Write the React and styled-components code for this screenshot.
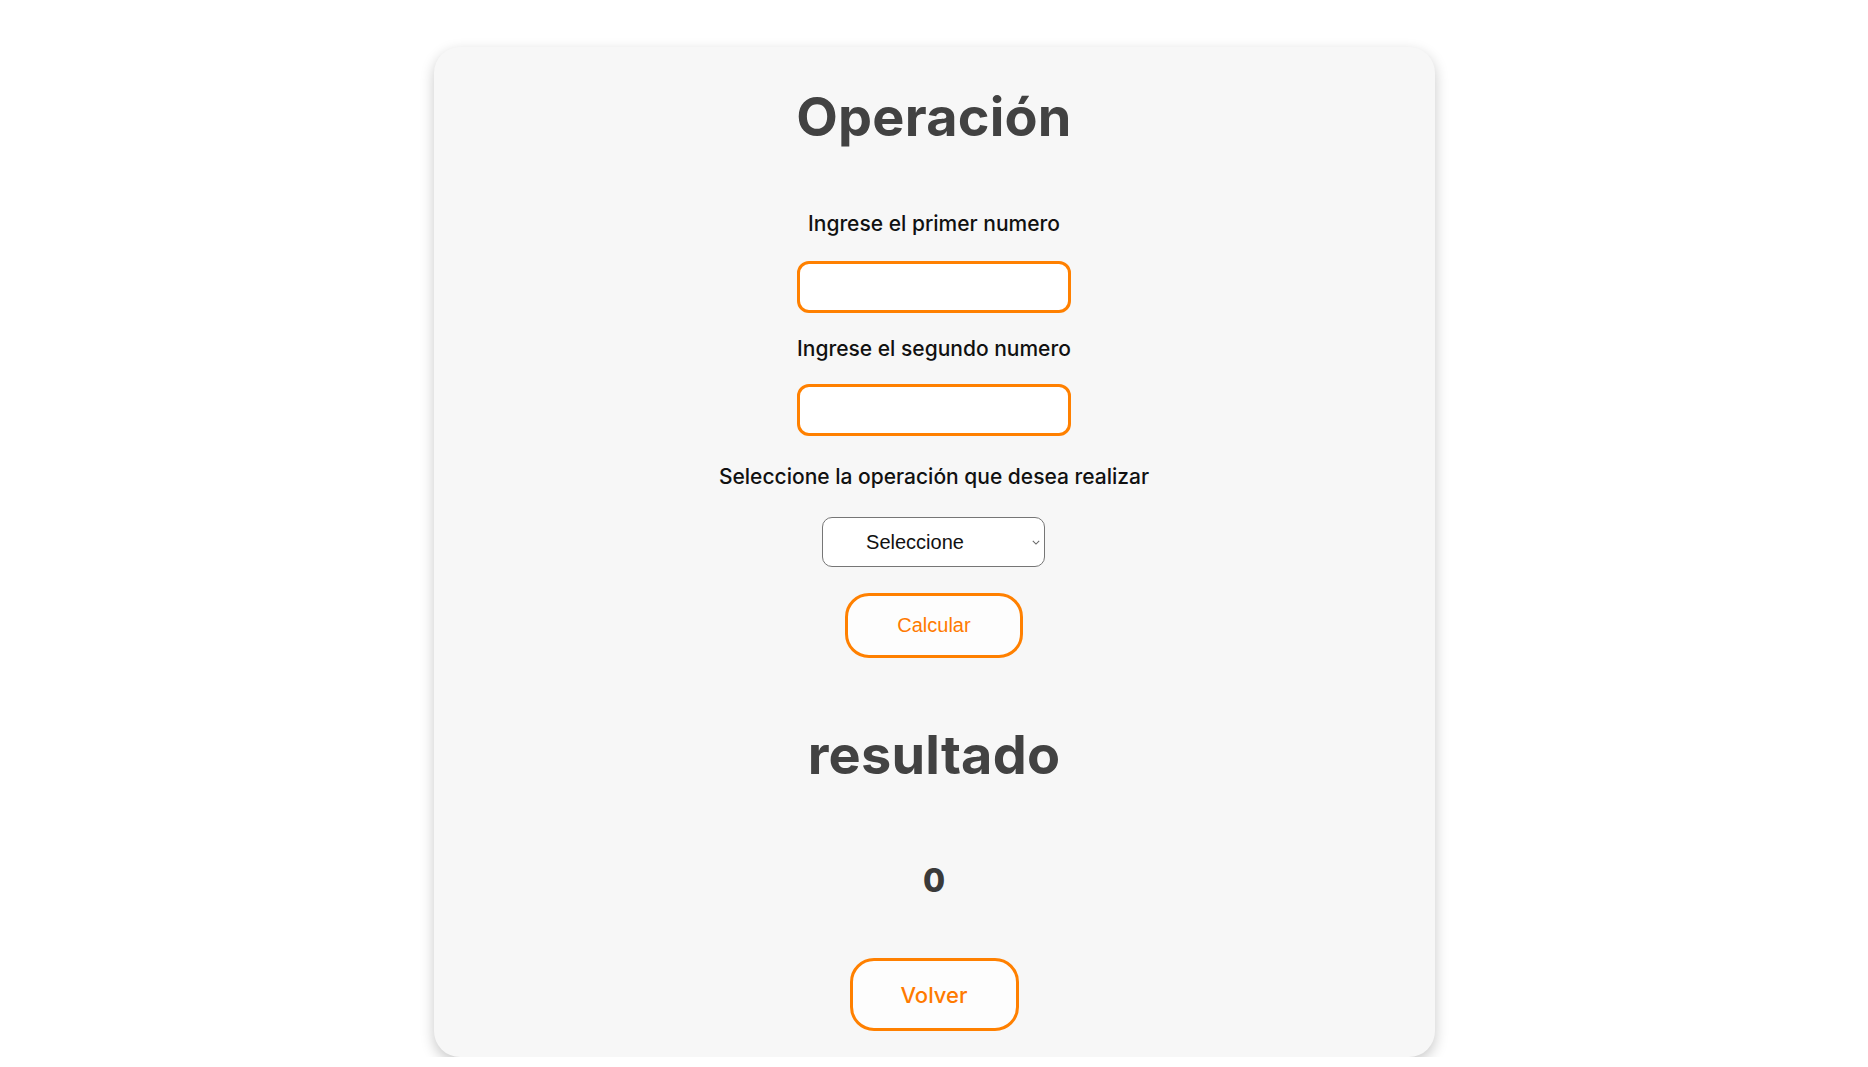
import React, { useState } from 'react';
import styled, { createGlobalStyle } from 'styled-components';

const GlobalStyle = createGlobalStyle`
  body {
    margin: 0;
    background: #ffffff;
    font-family: "Inter", "Open Sans", sans-serif;
  }
`;

const chevron =
  "data:image/svg+xml;utf8,<svg xmlns='http://www.w3.org/2000/svg' width='10' height='6' viewBox='0 0 10 6'><path d='M1 1l4 4 4-4' fill='none' stroke='%23666' stroke-width='1.3'/></svg>";

const Page = styled.main`
  display: flex;
  justify-content: center;
  padding-top: 47px;
`;

const Card = styled.section`
  width: 1001px;
  box-sizing: border-box;
  background: #f7f7f7;
  border-radius: 26px;
  box-shadow: 0 5px 14px rgba(0, 0, 0, 0.22);
  padding: 40px 0 26px;
  display: flex;
  flex-direction: column;
  align-items: center;
`;

const Title = styled.h1`
  margin: ${p => p.top || 0}px 0 ${p => p.gap || 0}px;
  font-size: 54px;
  line-height: 60px;
  font-weight: 700;
  color: #424242;
  letter-spacing: 0.2px;
`;

const Form = styled.form`
  display: flex;
  flex-direction: column;
  align-items: center;
`;

const Label = styled.label`
  font-size: 21px;
  line-height: 24px;
  font-weight: 500;
  color: #111;
  margin-top: ${p => p.top || 0}px;
  margin-bottom: ${p => p.bottom || 25}px;
`;

const NumberInput = styled.input`
  width: 274px;
  height: 52px;
  box-sizing: border-box;
  border: 3px solid #ff8000;
  border-radius: 12px;
  background: #fff;
  outline: none;
  font-size: 18px;
  padding: 0 12px;
`;

const Select = styled.select`
  appearance: none;
  width: 223px;
  height: 50px;
  box-sizing: border-box;
  border: 1px solid #767676;
  border-radius: 10px;
  background: #fff url("${chevron}") no-repeat right 4px center;
  background-size: 8px 5px;
  font-family: "Liberation Sans", Arial, sans-serif;
  font-size: 20px;
  color: #111;
  text-align: center;
  padding: 0 38px 0 0;
  margin-bottom: 26px;
`;

const OutlineButton = styled.button`
  width: ${p => p.w}px;
  height: ${p => p.h}px;
  box-sizing: border-box;
  border: 3px solid #ff8000;
  border-radius: 24px;
  background: #fdfdfd;
  color: #ff7a00;
  font-family: ${p => (p.plain ? '"Liberation Sans", Arial, sans-serif' : '"Inter", sans-serif')};
  font-size: ${p => (p.plain ? 20 : 22)}px;
  font-weight: ${p => (p.plain ? 400 : 500)};
  cursor: pointer;
`;

const Result = styled.h3`
  margin: 78px 0 59px;
  font-size: 32px;
  line-height: 36px;
  font-weight: 800;
  color: #3a3a3a;
`;

export default function App() {
  const [result] = useState(0);

  return (
    <>
      <GlobalStyle />
      <Page>
        <Card>
          <Title gap={65}>Operación</Title>
          <Form onSubmit={e => e.preventDefault()}>
            <Label htmlFor="n1">Ingrese el primer numero</Label>
            <NumberInput id="n1" type="text" />
            <Label htmlFor="n2" top={24} bottom={23}>Ingrese el segundo numero</Label>
            <NumberInput id="n2" type="text" />
            <Label htmlFor="op" top={29} bottom={28}>Seleccione la operación que desea realizar</Label>
            <Select id="op" defaultValue="">
              <option value="">Seleccione</option>
              <option value="suma">Suma</option>
              <option value="resta">Resta</option>
              <option value="multiplicacion">Multiplicación</option>
              <option value="division">División</option>
            </Select>
            <OutlineButton type="submit" plain w={178} h={65}>Calcular</OutlineButton>
          </Form>
          <Title top={67}>resultado</Title>
          <Result>{result}</Result>
          <OutlineButton type="button" w={169} h={73}>Volver</OutlineButton>
        </Card>
      </Page>
    </>
  );
}
